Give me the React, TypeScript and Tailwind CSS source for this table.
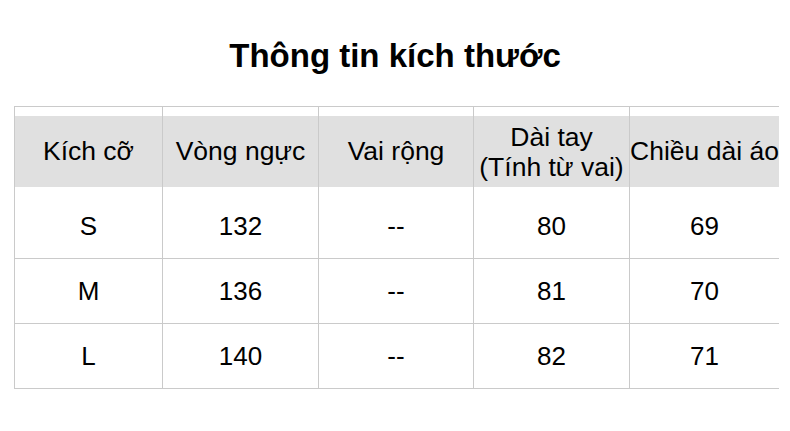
import React from "react";

const cols = ["w-[148px]", "w-[156px]", "w-[155px]", "w-[156px]", "w-[150px]"];

const rows = [
  ["S", "132", "--", "80", "69"],
  ["M", "136", "--", "81", "70"],
  ["L", "140", "--", "82", "71"],
];

export default function App() {
  return (
    <div
      className="w-[790px] h-[431px] bg-white text-black"
      style={{ fontFamily: '"Liberation Sans", Arial, sans-serif' }}
    >
      <div className="pt-[39px] text-center text-[33px] font-bold leading-none">
        Thông tin kích thước
      </div>
      <div className="mt-[34px] ml-[14px] w-[765px] border-t border-[#cacaca]">
        <div className="flex">
          {[
            <>Kích cỡ</>,
            <>Vòng ngực</>,
            <>Vai rộng</>,
            <span className="leading-[30px]">
              Dài tay
              <br />
              (Tính từ vai)
            </span>,
            <>Chiều dài áo</>,
          ].map((c, i) => (
            <div key={i} className={`${cols[i]} shrink-0 border-l border-[#cacaca] pt-[9px] pb-[7px]`}>
              <div className="h-[71px] bg-[#e0e0e0] flex items-center justify-center text-center text-[26.5px] whitespace-nowrap">
                {c}
              </div>
            </div>
          ))}
        </div>
        {rows.map((r, ri) => (
          <div key={ri} className="flex border-b border-[#cacaca]">
            {r.map((c, i) => (
              <div
                key={i}
                className={`${cols[i]} shrink-0 border-l border-[#cacaca] h-[64px] flex items-center justify-center text-[26px]`}
              >
                {c}
              </div>
            ))}
          </div>
        ))}
      </div>
    </div>
  );
}
